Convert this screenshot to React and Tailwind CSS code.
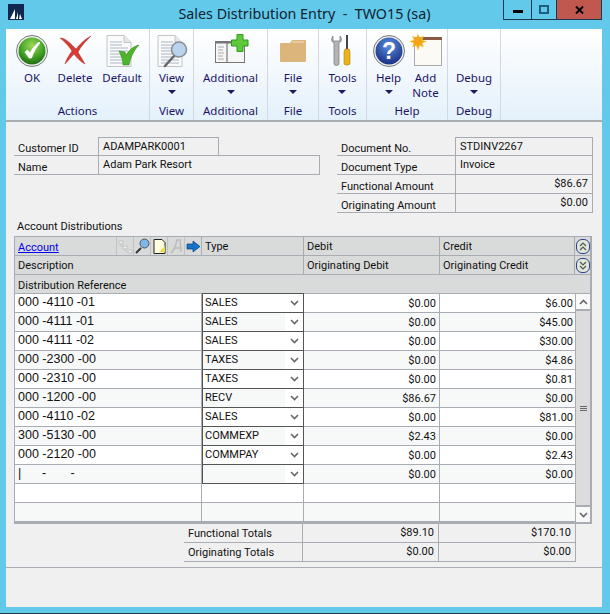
import React from 'react';

const OkIcon = () => (
  <svg width="34" height="34" viewBox="0 0 34 34">
    <defs>
      <radialGradient id="okg" cx="50%" cy="30%" r="75%">
        <stop offset="0%" stopColor="#9bd957" />
        <stop offset="55%" stopColor="#45a526" />
        <stop offset="100%" stopColor="#17630f" />
      </radialGradient>
    </defs>
    <circle cx="17" cy="17" r="15.500" fill="#f2f2f2" stroke="#777" strokeWidth="1" />
    <circle cx="17" cy="17" r="13.500" fill="url(#okg)" />
    <path d="M10 18l2.500-2 2.500 3c2-4 5-8 9-11l1 1c-3.500 4-6.500 9-8.500 15h-2.500z" fill="#fff" stroke="#fff" strokeWidth=".8" />
  </svg>
);

const DeleteIcon = () => (
  <svg width="34" height="34" viewBox="0 0 34 34">
    <path d="M2 4c6 0 11 6 16 11 4-5 9-10 15-13-5 5-10 10-13 16 2 4 5 8 7 12-4-2-8-6-11-10-3 3-6 7-9 10 1-4 4-9 7-13C10 11 6 7 2 4z" fill="#d63a32" stroke="#b0342c" strokeWidth=".5" />
  </svg>
);

const DocLines = () => (
  <>
    <path d="M3 1.500h17l7 7v24H3z" fill="#fbfbfb" stroke="#c4c4c4" />
    <path d="M20 1.500v7h7" fill="#e6e6e6" stroke="#c4c4c4" />
    <path d="M6 8h12M6 11h12M6 14h18M6 17h18M6 20h18M6 23h18M6 26h18M6 29h18" stroke="#a9b5c4" strokeWidth="1" />
  </>
);

const DefaultIcon = () => (
  <svg width="36" height="34" viewBox="0 0 36 34">
    <DocLines />
    <path d="M15 17l6 1 1 4c2-5 6-9 13-11-5 5-8 11-10 20h-6c0-5-2-10-4-14z" fill="#4db52d" stroke="#2f8a1a" strokeWidth=".6" />
  </svg>
);

const ViewIcon = () => (
  <svg width="34" height="34" viewBox="0 0 34 34">
    <DocLines />
    <path d="M19 22L10 32" stroke="#666" strokeWidth="2.500" strokeLinecap="round" />
    <circle cx="24" cy="15.500" r="7.500" fill="#b9d3ee" stroke="#8a8f96" strokeWidth="1.600" />
  </svg>
);

const AdditionalIcon = () => (
  <svg width="36" height="34" viewBox="0 0 36 34">
    <rect x="2.500" y="7.500" width="29" height="21" fill="#f6f6f6" stroke="#777" />
    <rect x="2.500" y="7.500" width="29" height="2" fill="#777" />
    <path d="M14 9v20" stroke="#777" strokeWidth="1.200" />
    <path d="M5 13h6M5 16h5M5 19h6M5 22h5M5 25h6" stroke="#aaa" />
    <path d="M24 .500h6v5.500h5v6h-5v5.500h-6V12h-5.500V6H24z" fill="#5fc93a" stroke="#2f9a1f" />
  </svg>
);

const FileIcon = () => (
  <svg width="28" height="24" viewBox="0 0 28 24">
    <path d="M1 5a1 1 0 011-1h9l2-3h13a1 1 0 011 1v20a1 1 0 01-1 1H2a1 1 0 01-1-1z" fill="#dcb57c" />
    <path d="M13 3h12" stroke="#efe0c6" />
  </svg>
);

const ToolsIcon = () => (
  <svg width="24" height="34" viewBox="0 0 24 34">
    <path d="M3 2c-2 2-2 6 1 7v20a2.500 2.500 0 005 0V9c3-1 3-5 1-7v5H7L3 7z" fill="#b4b4b4" stroke="#777" strokeWidth=".7" />
    <rect x="16" y="1" width="2" height="14" fill="#444" />
    <path d="M15 15h4l1 3v11a2 2 0 01-2 2h-2a2 2 0 01-2-2V18z" fill="#eab31a" stroke="#b07f0a" strokeWidth=".6" />
  </svg>
);

const HelpIcon = () => (
  <svg width="34" height="34" viewBox="0 0 34 34">
    <defs>
      <radialGradient id="hg" cx="50%" cy="30%" r="75%">
        <stop offset="0%" stopColor="#5d8fe0" />
        <stop offset="100%" stopColor="#12297f" />
      </radialGradient>
    </defs>
    <circle cx="17" cy="17" r="15.500" fill="#f0f0f0" stroke="#777" strokeWidth="1" />
    <circle cx="17" cy="17" r="13.500" fill="url(#hg)" />
    <text x="17" y="25" textAnchor="middle" fontSize="23" fontWeight="700" fill="#fff" fontFamily="Liberation Sans, sans-serif">?</text>
  </svg>
);

const NoteIcon = () => (
  <svg width="34" height="34" viewBox="0 0 34 34">
    <rect x="5.500" y="3.500" width="27" height="28" fill="#fbfaf5" stroke="#aaa" />
    <rect x="6" y="3" width="27" height="3" fill="#8a5a44" />
    <path d="M9 0l1.600 4 4-2-1.600 4 4.400 1.500-4.400 1.500 1.600 4-4-1.600L9 16l-1.600-4.600-4 1.600 1.600-4L.6 7.500 5 6 3.400 2l4 2z" fill="#f6a417" stroke="#f9d24a" strokeWidth=".5" />
  </svg>
);

const RibbonButton = ({ label, icon, arrow, width = '' }) => (
  <div className={`${width} flex flex-col items-center`}>
    <div className="h-[34px] flex items-center justify-center">{icon}</div>
    <div className="mt-[2px] text-center leading-[15px] whitespace-pre-line">{label}</div>
    {arrow && <div className="mt-[5px] w-0 h-0 border-l-[4px] border-r-[4px] border-t-[4px] border-l-transparent border-r-transparent border-t-[#1a1a5e]" />}
  </div>
);

const RibbonGroup = ({ title, width, inner = 'justify-center', children }) => (
  <div className={`${width} flex flex-col border-r border-[#d3d9de]`}>
    <div className={`h-[72px] pt-[5px] flex ${inner}`}>{children}</div>
    <div className="text-center leading-[15px] mt-[2px]">{title}</div>
  </div>
);

const Ribbon = () => (
  <div className="h-[93px] flex bg-gradient-to-b from-white to-[#e4f1fb] border-b-2 border-[#a9adb0] text-[11.500px] text-[#1c1464] font-['Noto_Sans',sans-serif]">
    <RibbonGroup title="Actions" width="w-[144px]" inner="pl-[9px] gap-[9px]">
      <RibbonButton label="OK" icon={<OkIcon />} width="w-[34px]" />
      <RibbonButton label="Delete" icon={<DeleteIcon />} width="w-[34px]" />
      <RibbonButton label="Default" icon={<DefaultIcon />} width="w-[42px]" />
    </RibbonGroup>
    <RibbonGroup title="View" width="w-[44px]">
      <RibbonButton label="View" icon={<ViewIcon />} arrow />
    </RibbonGroup>
    <RibbonGroup title="Additional" width="w-[74px]">
      <RibbonButton label="Additional" icon={<AdditionalIcon />} arrow />
    </RibbonGroup>
    <RibbonGroup title="File" width="w-[51px]">
      <RibbonButton label="File" icon={<FileIcon />} arrow />
    </RibbonGroup>
    <RibbonGroup title="Tools" width="w-[48px]">
      <RibbonButton label="Tools" icon={<ToolsIcon />} arrow />
    </RibbonGroup>
    <RibbonGroup title="Help" width="w-[81px]" inner="justify-center gap-[3px]">
      <RibbonButton label="Help" icon={<HelpIcon />} arrow />
      <RibbonButton label={'Add\nNote'} icon={<NoteIcon />} />
    </RibbonGroup>
    <RibbonGroup title="Debug" width="w-[53px]">
      <RibbonButton label="Debug" arrow icon={null} />
    </RibbonGroup>
  </div>
);

const TitleBar = () => (
  <div className="h-[29px] flex items-start">
    <div className="ml-[8px] mt-[4px] w-[16px] h-[16px] bg-[#10284f] flex items-end justify-center">
      <svg width="14" height="12" viewBox="0 0 14 12"><path d="M1 11L6 1v10zM7 11l2-7v7zM10 11l1-5 2 5z" fill="#fff" /></svg>
    </div>
    <div className="flex-1 text-center pl-[82px] pt-[4px] text-[14.300px] leading-[20px] text-[#10222e] font-['Noto_Sans',sans-serif] whitespace-pre">Sales Distribution Entry  -  TWO15 (sa)</div>
    <div className="mr-[8px] h-[20px] flex border border-t-0 border-[#1c3a4e]">
      <div className="w-[28px] flex items-center justify-center border-r border-[#1c3a4e]"><div className="w-[10px] h-[3px] bg-black mt-[3px]" /></div>
      <div className="w-[25px] flex items-center justify-center border-r border-[#1c3a4e]"><div className="w-[10px] h-[9px] border-2 border-[#1e5f80]" /></div>
      <div className="w-[44px] bg-[#c0584f] flex items-center justify-center">
        <svg width="9" height="8" viewBox="0 0 9 8"><path d="M1 .5l7 7M8 .5l-7 7" stroke="#000" strokeWidth="2" /></svg>
      </div>
    </div>
  </div>
);

const Field = ({ label, value, right, boxed, labelWidth = 'w-[85px]', valueWidth }) => (
  <div className="h-[19px] flex border-b border-[#a9acb3]">
    <div className={`${labelWidth} pl-[4px] border-r border-[#a9acb3] leading-[23px] truncate`}>{label}</div>
    <div className={`${valueWidth} ${boxed ? 'border-t border-r border-[#a9acb3]' : ''} px-[4px] leading-[18px] ${right ? 'text-right' : ''}`}>{value}</div>
  </div>
);

const rows = [
  ['000 -4110 -01', 'SALES', '$0.00', '$6.00'],
  ['000 -4111 -01', 'SALES', '$0.00', '$45.00'],
  ['000 -4111 -02', 'SALES', '$0.00', '$30.00'],
  ['000 -2300 -00', 'TAXES', '$0.00', '$4.86'],
  ['000 -2310 -00', 'TAXES', '$0.00', '$0.81'],
  ['000 -1200 -00', 'RECV', '$86.67', '$0.00'],
  ['000 -4110 -02', 'SALES', '$0.00', '$81.00'],
  ['300 -5130 -00', 'COMMEXP', '$2.43', '$0.00'],
  ['000 -2120 -00', 'COMMPAY', '$0.00', '$2.43'],
];

const Chevron = ({ up }) => (
  <svg width="9" height="6" viewBox="0 0 9 6">
    <path d={up ? 'M1 5l3.500-3.500L8 5' : 'M1 1l3.500 3.500L8 1'} fill="none" stroke="#666" strokeWidth="1.600" />
  </svg>
);

const GridRow = ({ row, alt, showSelect }) => (
  <div className={`h-[19px] flex border-b border-[#a9acb3] ${alt ? 'bg-[#f7f9f9]' : 'bg-white'}`}>
    <div className="w-[187px] pl-[3px] border-r border-[#a9acb3] leading-[16px] text-[12.500px] font-['Liberation_Sans',sans-serif] whitespace-pre">{row[0]}</div>
    {showSelect ? (
      <div className="w-[102px] -my-px h-[20px] border border-[#555] flex items-center justify-between pl-[2px]">
        <span className="pt-[1px]">{row[1]}</span>
        <div className="w-[18px] h-full bg-white flex items-center justify-center"><Chevron /></div>
      </div>
    ) : (
      <div className="w-[102px] border-r border-[#a9acb3]" />
    )}
    <div className="w-[136px] px-[3px] border-r border-[#a9acb3] text-right leading-[19px]">{row[2]}</div>
    <div className="flex-1 pr-[2px] text-right leading-[19px]">{row[3]}</div>
  </div>
);

const RoundBtn = ({ up }) => (
  <div className="w-[14px] h-[15px] rounded-[6px] border border-[#2f3f8f] bg-[#dfe8d8] flex items-center justify-center">
    <svg width="8" height="9" viewBox="0 0 8 9">
      <path d={up ? 'M1 4l3-3 3 3M1 8l3-3 3 3' : 'M1 1l3 3 3-3M1 5l3 3 3-3'} fill="none" stroke="#555" strokeWidth="1.200" />
    </svg>
  </div>
);

const HeaderCell = ({ width, children }) => (
  <div className={`${width} h-full pl-[3px] pt-[2px] flex items-center border-r border-[#a9acb3]`}>{children}</div>
);

const ToolIcons = () => (
  <div className="flex h-full">
    <div className="w-[17px] border-l border-[#bfc1c3] flex items-center justify-center">
      <svg width="15" height="15" viewBox="0 0 15 15"><path d="M1 2h4v3H1zM5 7h4v3H5zM10 11h4v3h-4zM3 5v2h2M7 10v2h3" fill="#eee" stroke="#c2c2c2" /></svg>
    </div>
    <div className="w-[17px] border-l border-[#bfc1c3] flex items-center justify-center">
      <svg width="15" height="16" viewBox="0 0 15 16"><path d="M6 10l-5 5" stroke="#333" strokeWidth="2" /><circle cx="9.500" cy="5.500" r="4.500" fill="#7fb8e8" stroke="#555" /></svg>
    </div>
    <div className="w-[17px] border-l border-[#bfc1c3] flex items-center justify-center">
      <svg width="13" height="15" viewBox="0 0 13 15"><path d="M1 .5h8l3 3v11H1z" fill="#fffde0" stroke="#222" /><path d="M6 13l6-6v6z" fill="#f0d94a" /></svg>
    </div>
    <div className="w-[17px] border-l border-[#bfc1c3] flex items-center justify-center">
      <svg width="15" height="15" viewBox="0 0 15 15"><path d="M2 14c3-3 5-8 6-13h3l1 12M5 9h7" fill="none" stroke="#bcbcbc" strokeWidth="1.500" /></svg>
    </div>
    <div className="w-[17px] border-l border-[#bfc1c3] flex items-center justify-center">
      <svg width="15" height="13" viewBox="0 0 15 13"><path d="M1 4h6V1l7 5.500L7 12V9H1z" fill="#1573c9" stroke="#0d3f77" strokeWidth=".7" /></svg>
    </div>
  </div>
);

const DistributionGrid = () => (
  <div className="ml-[8px] mr-[10px] border-l border-t border-r-2 border-b-2 border-[#a9acb3]">
    <div className="h-[19px] flex bg-[#d9dbda] border-b border-[#a9acb3]">
      <div className="w-[187px] h-full flex justify-between border-r border-[#a9acb3]">
        <a className="pl-[3px] leading-[21px] text-[#0000ee] underline">Account</a>
        <ToolIcons />
      </div>
      <HeaderCell width="w-[102px]">Type</HeaderCell>
      <HeaderCell width="w-[136px]">Debit</HeaderCell>
      <HeaderCell width="w-[135px]">Credit</HeaderCell>
      <div className="flex-1 flex items-center justify-center"><RoundBtn up /></div>
    </div>
    <div className="h-[19px] flex bg-[#d9dbda] border-b border-[#a9acb3]">
      <HeaderCell width="w-[289px]">Description</HeaderCell>
      <HeaderCell width="w-[136px]">Originating Debit</HeaderCell>
      <HeaderCell width="w-[135px]">Originating Credit</HeaderCell>
      <div className="flex-1 flex items-center justify-center"><RoundBtn /></div>
    </div>
    <div className="h-[19px] pl-[3px] leading-[21px] bg-[#d9dbda] border-b border-[#a9acb3]">Distribution Reference</div>
    <div className="flex">
      <div className="w-[560px]">
        {rows.map((row, i) => <GridRow key={i} row={row} alt={i % 2 === 1} showSelect />)}
        <GridRow row={['|      -       -', '', '$0.00', '$0.00']} alt={true} showSelect />
        <GridRow row={['', '', '', '']} />
        <GridRow row={['', '', '', '']} alt={true} />
      </div>
      <div className="flex-1 flex flex-col bg-[#dcdcdc] border-l border-[#a9acb3]">
        <div className="h-[17px] bg-[#f8f8f8] border-b-2 border-[#a9acb3] flex items-center justify-center"><Chevron up /></div>
        <div className="flex-1 flex flex-col items-center justify-center gap-px">
          <div className="w-[7px] h-px bg-[#666]" />
          <div className="w-[7px] h-px bg-[#666]" />
          <div className="w-[7px] h-px bg-[#666]" />
        </div>
        <div className="h-[17px] bg-[#f8f8f8] border-t-2 border-[#a9acb3] flex items-center justify-center"><Chevron /></div>
      </div>
    </div>
  </div>
);

const TotalsRow = ({ label, debit, credit }) => (
  <div className="h-[19px] ml-[178px] mr-[26px] flex border-b border-[#a9acb3]">
    <div className="w-[119px] pl-[4px] border-r border-[#a9acb3] leading-[20px]">{label}</div>
    <div className="w-[136px] pr-[4px] border-r border-[#a9acb3] text-right leading-[18px]">{debit}</div>
    <div className="flex-1 pr-[4px] border-r border-[#a9acb3] text-right leading-[18px]">{credit}</div>
  </div>
);

export default function App() {
  return (
    <div className="w-[610px] h-[614px] bg-[#62c9ea] flex flex-col border-b border-[#1d3a4a] text-[11px] text-[#111] font-['Roboto',sans-serif] overflow-hidden">
      <TitleBar />
      <div className="ml-[6px] mr-[8px] mb-[6px] flex-1 flex flex-col bg-[#f0f0f0]">
        <Ribbon />
        <div className="pt-[15px] flex-1 flex flex-col">
          <div className="flex justify-between pl-[8px] pr-[9px]">
            <div className="w-[306px]">
              <Field label="Customer ID" value="ADAMPARK0001" boxed valueWidth="w-[120px]" />
              <Field label="Name" value="Adam Park Resort" valueWidth="flex-1 border-r border-[#a9acb3]" />
            </div>
            <div className="w-[256px]">
              <Field label="Document No." value="STDINV2267" boxed labelWidth="w-[119px]" valueWidth="flex-1" />
              <Field label="Document Type" value="Invoice" labelWidth="w-[119px]" valueWidth="flex-1 border-r border-[#a9acb3]" />
              <Field label="Functional Amount" value="$86.67" right labelWidth="w-[119px]" valueWidth="flex-1 border-r border-[#a9acb3]" />
              <Field label="Originating Amount" value="$0.00" right labelWidth="w-[119px]" valueWidth="flex-1 border-r border-[#a9acb3]" />
            </div>
          </div>
          <div className="ml-[11px] mt-[7px] mb-[2px] h-[14px] leading-[14px]">Account Distributions</div>
          <DistributionGrid />
          <TotalsRow label="Functional Totals" debit="$89.10" credit="$170.10" />
          <TotalsRow label="Originating Totals" debit="$0.00" credit="$0.00" />
          <div className="mt-[5px] border-t border-[#a9acb3]" />
        </div>
      </div>
    </div>
  );
}
